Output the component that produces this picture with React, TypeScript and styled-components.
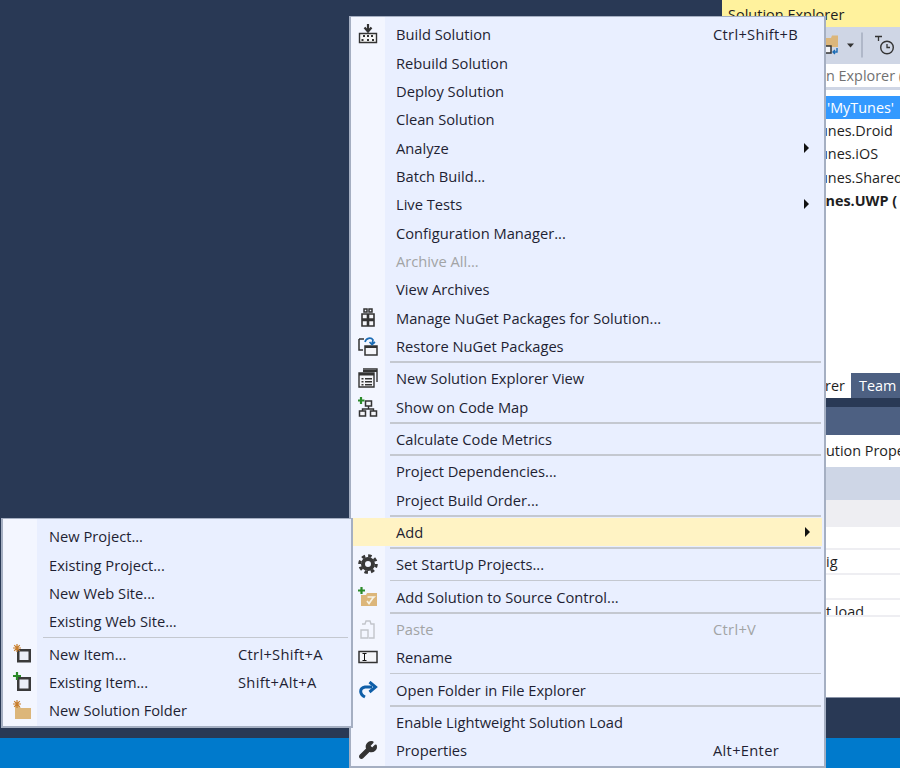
import React from 'react';
import styled, { createGlobalStyle } from 'styled-components';
import { Wrench } from 'lucide-react';

const Global = createGlobalStyle`
  html, body { margin: 0; padding: 0; height: 100%; }
  body { background: #293955; font-family: "Open Sans", "Liberation Sans", sans-serif; overflow: hidden; }
`;

const Desktop = styled.div`
  position: relative;
  width: 900px;
  height: 768px;
  display: flex;
  flex-direction: column;
  overflow: hidden;
  background: #293955;
`;

const Workspace = styled.div`
  flex: 0 0 738px;
  box-sizing: border-box;
  display: flex;
  justify-content: flex-end;
  padding-bottom: 40px;
`;

const StatusBar = styled.div`
  flex: 0 0 30px;
  background: #007acc;
`;

const SidePanel = styled.div`
  width: 178px;
  display: flex;
  flex-direction: column;
  overflow: hidden;
  background: #fff;
  border-bottom: 1px solid #8a94a8;
  color: #1e1e1e;
  font-size: 14.4px;
  white-space: nowrap;
`;

const PanelTitle = styled.div`
  flex: 0 0 27px;
  box-sizing: border-box;
  background: #fff29d;
  padding: 5px 6px 0;
  font-size: 14.5px;
`;

const PanelTools = styled.div`
  flex: 0 0 37px;
  background: #cfd6e5;
  display: flex;
  align-items: center;
  justify-content: flex-end;
  padding-right: 5px;
`;

const Search = styled.div`
  flex: 0 0 26px;
  box-sizing: border-box;
  padding: 2px 0 0 104px;
  color: #717171;
  border-bottom: 3px solid #cfd6e5;
`;

const Tree = styled.div`
  flex: 0 0 280px;
  box-sizing: border-box;
  padding-top: 6px;
  display: flex;
  flex-direction: column;
`;

const TreeRow = styled.div<{ $selected?: boolean; $bold?: boolean }>`
  height: 23.2px;
  line-height: 23px;
  padding-left: ${p => (p.$selected ? '105px' : p.$bold ? '94px' : '97px')};
  background: ${p => (p.$selected ? '#3399ff' : 'transparent')};
  color: ${p => (p.$selected ? '#fff' : '#1e1e1e')};
  font-weight: ${p => (p.$bold ? 700 : 400)};
`;

const Tabs = styled.div`
  flex: 0 0 28px;
  box-sizing: border-box;
  display: flex;
  justify-content: flex-end;
  padding-top: 3px;
`;

const Tab = styled.div<{ $active?: boolean }>`
  width: ${p => (p.$active ? '129px' : '49px')};
  box-sizing: border-box;
  padding-left: ${p => (p.$active ? '103px' : '8px')};
  background: ${p => (p.$active ? '#fff' : '#4d6082')};
  color: ${p => (p.$active ? '#1e1e1e' : '#fff')};
  line-height: 25px;
`;

const TabGap = styled.div`
  flex: 0 0 9px;
  background: #293955;
`;

const PropsHead = styled.div`
  flex: 0 0 28px;
  background: #4d6082;
`;

const PropRow = styled.div<{ $bg?: string; $h: number; $line?: boolean }>`
  flex: 0 0 ${p => p.$h}px;
  box-sizing: border-box;
  background: ${p => p.$bg || '#fff'};
  border-bottom: ${p => (p.$line ? '2px solid #eeeef2' : 'none')};
  padding-left: 104px;
  line-height: 24px;
  overflow: hidden;
`;

const PropTitle = styled(PropRow)`
  line-height: 32px;
`;

const Menu = styled.div<{ $gutter: number }>`
  position: absolute;
  box-sizing: border-box;
  display: flex;
  flex-direction: column;
  background: linear-gradient(to right, #f3f6ff ${p => p.$gutter}px, #e9efff ${p => p.$gutter}px);
  border: 2px solid #a5afc2;
  border-top-width: 1px;
  color: #1f1f33;
  font-size: 14.7px;
`;

const MainMenu = styled(Menu)`
  left: 349px;
  top: 16px;
  width: 477px;
  height: 752px;
  padding-top: 3px;
`;

const SubMenu = styled(Menu)`
  left: 1px;
  top: 518px;
  width: 352px;
  height: 210px;
  padding-top: 3px;
`;

const Row = styled.div<{ $gutter: number; $keys: number; $hot?: boolean; $off?: boolean }>`
  flex: 0 0 28.35px;
  display: grid;
  grid-template-columns: ${p => p.$gutter}px 1fr ${p => p.$keys}px 17px;
  align-items: center;
  margin-right: ${p => (p.$hot ? '2px' : '3px')};
  background: ${p => (p.$hot ? '#fff3c4' : 'transparent')};
  color: ${p => (p.$off ? '#a2a4a5' : 'inherit')};
`;

const IconCell = styled.span<{ $nudge: number }>`
  display: flex;
  align-items: center;
  justify-content: center;
  height: 24px;
  padding-left: ${p => p.$nudge}px;
`;

const Label = styled.span<{ $pad: number }>`
  padding-left: ${p => p.$pad}px;
  white-space: nowrap;
`;

const Keys = styled.span`
  white-space: nowrap;
  letter-spacing: 0.3px;
`;

const Arrow = styled.span`
  width: 0;
  height: 0;
  border-left: 5px solid #111;
  border-top: 5px solid transparent;
  border-bottom: 5px solid transparent;
`;

const Separator = styled.div<{ $left: number }>`
  flex: 0 0 4px;
  display: flex;
  align-items: center;
  padding-left: ${p => p.$left}px;
  margin-right: 3px;
  &::after {
    content: '';
    flex: 1;
    height: 1.5px;
    background: #c4c8d0;
  }
`;

const ink = '#333';

const BuildIcon = () => (
  <svg width="20" height="20" viewBox="0 0 20 20">
    <path d="M1.500 9.500h17v9h-17z" fill="#f6f6f6" stroke={ink} strokeWidth="1.4" />
    <path d="M10 0v6M6.500 3.500L10 7.500l3.500-4" fill="none" stroke={ink} strokeWidth="2.2" />
    <path d="M5 11h2v2H5zM9 11h2v2H9zM13 11h2v2h-2zM3.500 15h2v2h-2zM9 15h2v2H9zM14 15h2v2h-2z" fill={ink} />
  </svg>
);

const NugetIcon = () => (
  <svg width="18" height="20" viewBox="0 0 18 20">
    <path d="M3 6h5.500v5H3zM9.500 6H15v5H9.500zM3 12.500h5.500V18H3zM9.500 12.500H15V18H9.500z" fill="#f4f5f9" stroke={ink} strokeWidth="1.6" />
    <path d="M5 1h3v3H5zM10 1h3v3h-3z" fill="none" stroke={ink} strokeWidth="1.5" />
  </svg>
);

const RestoreIcon = () => (
  <svg width="20" height="20" viewBox="0 0 20 20">
    <path d="M1 3h5M1 3v11h4" fill="none" stroke={ink} strokeWidth="1.5" />
    <path d="M7 10h12v9H7z" fill="#f4f5f9" stroke={ink} strokeWidth="1.5" />
    <path d="M7 10h12v2H7z" fill={ink} />
    <path d="M7 6c1-4 6-5 8-2l-1 4M11.500 6l2.500 2.500 3-2.500" fill="none" stroke="#1b6cb5" strokeWidth="1.7" />
  </svg>
);

const ExplorerIcon = () => (
  <svg width="20" height="20" viewBox="0 0 20 20">
    <path d="M5 1h14v13" fill="none" stroke={ink} strokeWidth="1.4" />
    <path d="M5 2h14v2H5z" fill={ink} />
    <path d="M1 5h15v14H1z" fill="#f4f5f9" stroke={ink} strokeWidth="1.4" />
    <path d="M1 5h15v2.500H1zM3.500 10h2v1.500h-2zM7 10h7v1.500H7zM3.500 13h2v1.500h-2zM7 13h7v1.500H7zM3.500 16h2v1.500h-2zM7 16h7v1.500H7z" fill={ink} />
  </svg>
);

const CodeMapIcon = () => (
  <svg width="20" height="20" viewBox="0 0 20 20">
    <path d="M7.500 4h6v5h-6zM1.500 14h6v5h-6zM12.500 14h6v5h-6z" fill="#f4f5f9" stroke={ink} strokeWidth="1.5" />
    <path d="M10.500 9v3M4.500 14v-2h11v2" fill="none" stroke={ink} strokeWidth="1.4" />
    <path d="M3 0v7M0 3.500h6.500" stroke="#2a8a2a" strokeWidth="2.2" />
  </svg>
);

const GearIcon = () => (
  <svg width="20" height="20" viewBox="0 0 20 20">
    <circle cx="10" cy="10" r="8.300" fill="none" stroke="#383838" strokeWidth="3" strokeDasharray="3.500 3" />
    <circle cx="10" cy="10" r="5" fill="none" stroke="#383838" strokeWidth="4" />
  </svg>
);

const SourceIcon = () => (
  <svg width="20" height="20" viewBox="0 0 20 20">
    <path d="M3 8h5l1-2h10v13H3z" fill="#dcb67a" />
    <path d="M9.500 10h6.500l-1.500 1.500-3.500 5-2-2.500" fill="none" stroke="#f7f3e6" strokeWidth="1.7" />
    <path d="M3.500 0v7M0 3.500h7" stroke="#2a8a2a" strokeWidth="2.2" />
  </svg>
);

const PasteIcon = () => (
  <svg width="18" height="20" viewBox="0 0 18 20">
    <path d="M3 5h3l1-3h4l1 3h3v14h-5" fill="none" stroke="#c2c5cb" strokeWidth="1.4" />
    <path d="M2 11h7v8H2z" fill="none" stroke="#c2c5cb" strokeWidth="1.4" />
  </svg>
);

const RenameIcon = () => (
  <svg width="20" height="14" viewBox="0 0 20 14">
    <path d="M1 1.500h18v11H1z" fill="#f4f5f9" stroke={ink} strokeWidth="1.5" />
    <path d="M4.500 3.500h4M4.500 10.500h4M6.500 3.500v7" fill="none" stroke="#111" strokeWidth="1" />
  </svg>
);

const RedoIcon = () => (
  <svg width="20" height="18" viewBox="0 0 20 18">
    <path d="M7 16C1 13 1.500 7 7 6h7" fill="none" stroke="#0e5ea8" strokeWidth="3" />
    <path d="M11.500 1L17.500 6l-6 5" fill="none" stroke="#0e5ea8" strokeWidth="3" />
  </svg>
);

const Spark = () => (
  <path d="M5 0v8M1 4h8M2.200 1.200l5.600 5.600M7.800 1.200l-5.600 5.600" stroke="#c77d2c" strokeWidth="1.2" />
);

const NewItemIcon = () => (
  <svg width="20" height="20" viewBox="0 0 20 20">
    <path d="M6.250 6.250h11.500v11h-11.500z" fill="#eceff8" stroke="#3a3a3a" strokeWidth="2.5" />
    <Spark />
  </svg>
);

const ExistingItemIcon = () => (
  <svg width="20" height="20" viewBox="0 0 20 20">
    <path d="M6.250 6.250h11.500v11.500h-11.500z" fill="#eceff8" stroke="#3a3a3a" strokeWidth="2.5" />
    <path d="M5 0v8M1 4h8" stroke="#2a8a2a" strokeWidth="2.2" />
  </svg>
);

const FolderIcon = () => (
  <svg width="20" height="20" viewBox="0 0 20 20">
    <path d="M3 6h4l2 2h10v11H3z" fill="#dcb67a" />
    <Spark />
  </svg>
);

const ToolbarIcons = () => (
  <svg width="70" height="30" viewBox="0 0 70 30">
    <path d="M1 7h5l1-2.500h6V16H1z" fill="#dcb67a" />
    <path d="M0 15h6v7H0z" fill="#f4f5f9" stroke="#333" strokeWidth="1.500" />
    <path d="M12 17v4H8M10 19l-2 2 2 2" fill="none" stroke="#1b6cb5" strokeWidth="1.400" />
    <path d="M22 12.500h7l-3.500 4z" fill="#333" />
    <path d="M37 1.500v25" stroke="#9aa3b5" strokeWidth="1.200" />
    <circle cx="62" cy="16.500" r="6.300" fill="none" stroke="#333" strokeWidth="1.400" />
    <path d="M62 13v3.500h3M50 5.500h7M53.500 5.500v4.500" fill="none" stroke="#333" strokeWidth="1.300" />
  </svg>
);

type Item =
  | 'sep'
  | { text: string; keys?: string; icon?: React.ReactNode; more?: boolean; off?: boolean; hot?: boolean };

const mainItems: Item[] = [
  { text: 'Build Solution', keys: 'Ctrl+Shift+B', icon: <BuildIcon /> },
  { text: 'Rebuild Solution' },
  { text: 'Deploy Solution' },
  { text: 'Clean Solution' },
  { text: 'Analyze', more: true },
  { text: 'Batch Build...' },
  { text: 'Live Tests', more: true },
  { text: 'Configuration Manager...' },
  { text: 'Archive All...', off: true },
  { text: 'View Archives' },
  { text: 'Manage NuGet Packages for Solution...', icon: <NugetIcon /> },
  { text: 'Restore NuGet Packages', icon: <RestoreIcon /> },
  'sep',
  { text: 'New Solution Explorer View', icon: <ExplorerIcon /> },
  { text: 'Show on Code Map', icon: <CodeMapIcon /> },
  'sep',
  { text: 'Calculate Code Metrics' },
  'sep',
  { text: 'Project Dependencies...' },
  { text: 'Project Build Order...' },
  'sep',
  { text: 'Add', more: true, hot: true },
  'sep',
  { text: 'Set StartUp Projects...', icon: <GearIcon /> },
  'sep',
  { text: 'Add Solution to Source Control...', icon: <SourceIcon /> },
  'sep',
  { text: 'Paste', keys: 'Ctrl+V', off: true, icon: <PasteIcon /> },
  { text: 'Rename', icon: <RenameIcon /> },
  'sep',
  { text: 'Open Folder in File Explorer', icon: <RedoIcon /> },
  'sep',
  { text: 'Enable Lightweight Solution Load' },
  { text: 'Properties', keys: 'Alt+Enter', icon: <Wrench size={20} color="#333" fill="#333" strokeWidth={1.5} /> },
];

const addItems: Item[] = [
  { text: 'New Project...' },
  { text: 'Existing Project...' },
  { text: 'New Web Site...' },
  { text: 'Existing Web Site...' },
  'sep',
  { text: 'New Item...', keys: 'Ctrl+Shift+A', icon: <NewItemIcon /> },
  { text: 'Existing Item...', keys: 'Shift+Alt+A', icon: <ExistingItemIcon /> },
  { text: 'New Solution Folder', icon: <FolderIcon /> },
];

function MenuRows({ items, gutter, pad, keys, nudge }: { items: Item[]; gutter: number; pad: number; keys: number; nudge: number }) {
  return (
    <>
      {items.map((item, i) =>
        item === 'sep' ? (
          <Separator key={i} $left={gutter + pad - 6} />
        ) : (
          <Row key={i} $gutter={gutter} $keys={keys} $hot={item.hot} $off={item.off}>
            <IconCell $nudge={nudge}>{item.icon}</IconCell>
            <Label $pad={pad}>{item.text}</Label>
            <Keys>{item.keys}</Keys>
            {item.more ? <Arrow /> : <span />}
          </Row>
        )
      )}
    </>
  );
}

export default function App() {
  return (
    <Desktop>
      <Global />
      <Workspace>
        <SidePanel>
          <PanelTitle>Solution Explorer</PanelTitle>
          <PanelTools>
            <ToolbarIcons />
          </PanelTools>
          <Search>n Explorer (</Search>
          <Tree>
            <TreeRow $selected>'MyTunes'</TreeRow>
            <TreeRow>unes.Droid</TreeRow>
            <TreeRow>unes.iOS</TreeRow>
            <TreeRow>unes.Shared</TreeRow>
            <TreeRow $bold>unes.UWP (</TreeRow>
          </Tree>
          <Tabs>
            <Tab $active>rer</Tab>
            <Tab>Team</Tab>
          </Tabs>
          <TabGap />
          <PropsHead />
          <PropTitle $h={32}>ution Prope</PropTitle>
          <PropRow $h={33} $bg="#ced6e6" />
          <PropRow $h={27} $bg="#eeeef2" />
          <PropRow $h={23} $line />
          <PropRow $h={25} $line>ig</PropRow>
          <PropRow $h={25} $line />
          <PropRow $h={17} $line>t load</PropRow>
          <PropRow $h={80} />
        </SidePanel>
      </Workspace>
      <StatusBar />
      <MainMenu $gutter={34}>
        <MenuRows items={mainItems} gutter={34} pad={11} keys={91} nudge={0} />
      </MainMenu>
      <SubMenu $gutter={34}>
        <MenuRows items={addItems} gutter={34} pad={12} keys={93} nudge={4} />
      </SubMenu>
    </Desktop>
  );
}
